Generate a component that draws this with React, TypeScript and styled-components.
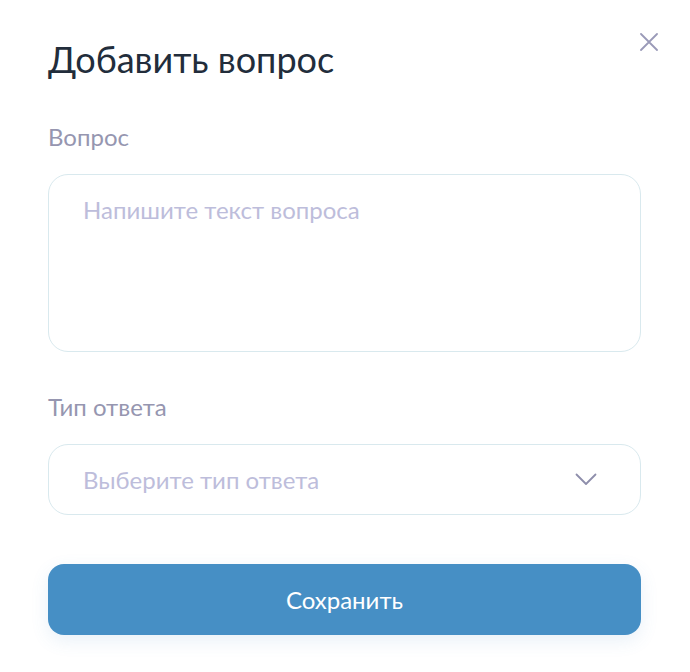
import React from "react";
import styled, { createGlobalStyle } from "styled-components";

const GlobalStyle = createGlobalStyle`
  html, body {
    margin: 0;
    padding: 0;
    background: #ffffff;
  }
  * {
    box-sizing: border-box;
  }
`;

const App: React.FC = () => {
  return (
    <>
      <GlobalStyle />
      <Modal>
        <CloseButton aria-label="Закрыть">
          <svg width="18" height="18" viewBox="0 0 18 18" fill="none">
            <path
              d="M1 1L17 17M17 1L1 17"
              stroke="#9a9ab8"
              strokeWidth="1.8"
              strokeLinecap="round"
            />
          </svg>
        </CloseButton>
        <Title>Добавить вопрос</Title>
        <Field top={41}>
          <Label>Вопрос</Label>
          <TextArea placeholder="Напишите текст вопроса" />
        </Field>
        <Field top={40}>
          <Label>Тип ответа</Label>
          <Select>
            <Placeholder>Выберите тип ответа</Placeholder>
            <svg width="22" height="13" viewBox="0 0 22 13" fill="none">
              <path
                d="M1.5 1.5L11 11L20.5 1.5"
                stroke="#8e8eab"
                strokeWidth="1.8"
                strokeLinecap="round"
                strokeLinejoin="round"
              />
            </svg>
          </Select>
        </Field>
        <SaveButton>Сохранить</SaveButton>
      </Modal>
    </>
  );
};

export default App;

const Modal = styled.div`
  position: relative;
  width: 690px;
  min-height: 672px;
  padding: 38px 49px 0 48px;
  display: flex;
  flex-direction: column;
  font-family: Lato, "Noto Sans", sans-serif;
  background: #ffffff;
`;

const CloseButton = styled.button`
  position: absolute;
  top: 33px;
  right: 32px;
  width: 18px;
  height: 18px;
  padding: 0;
  border: none;
  background: none;
  cursor: pointer;
  display: flex;
`;

const Title = styled.h1`
  margin: 0;
  font-size: 36px;
  line-height: 43px;
  font-weight: 400;
  color: #222d3b;
`;

const Field = styled.div<{ top: number }>`
  display: flex;
  flex-direction: column;
  gap: 23px;
  margin-top: ${({ top }) => top}px;
`;

const Label = styled.div`
  font-size: 24px;
  line-height: 29px;
  color: #9696b0;
`;

const TextArea = styled.textarea`
  width: 100%;
  height: 178px;
  padding: 20px 34px;
  border: 1.5px solid #d9e9ee;
  border-radius: 20px;
  resize: none;
  outline: none;
  font-family: inherit;
  font-size: 24px;
  line-height: 29px;
  color: #222d3b;

  &::placeholder {
    color: #bdbddb;
  }
`;

const Select = styled.div`
  height: 71px;
  padding: 0 43px 0 34px;
  border: 1.5px solid #d9e9ee;
  border-radius: 20px;
  display: flex;
  align-items: center;
  justify-content: space-between;
  cursor: pointer;
`;

const Placeholder = styled.span`
  font-size: 24px;
  line-height: 29px;
  color: #bdbddb;
`;

const SaveButton = styled.button`
  margin-top: 49px;
  height: 71px;
  width: 100%;
  border: none;
  border-radius: 16px;
  background: #468fc5;
  color: #ffffff;
  font-family: inherit;
  font-size: 24px;
  box-shadow: 0 6px 18px rgba(70, 143, 197, 0.12);
  cursor: pointer;
`;
